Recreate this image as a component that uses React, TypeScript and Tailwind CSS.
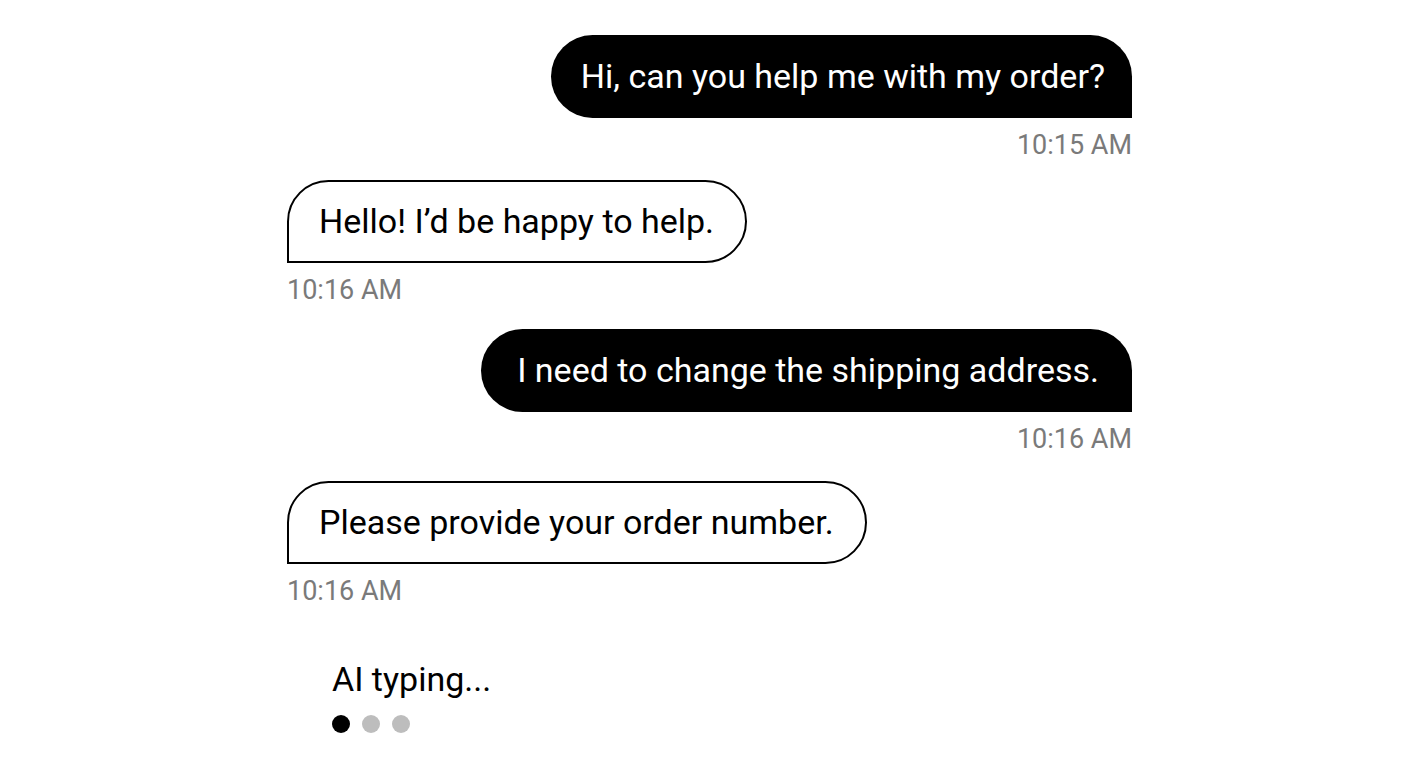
const font = { fontFamily: 'Roboto, "Noto Sans", sans-serif' }

type Msg = { text: string; time: string; mine: boolean; mt: string; pad: string }

const messages: Msg[] = [
  { text: 'Hi, can you help me with my order?', time: '10:15 AM', mine: true, mt: 'mt-[35px]', pad: 'pl-[30px] pr-[27px]' },
  { text: 'Hello! I\u2019d be happy to help.', time: '10:16 AM', mine: false, mt: 'mt-[19px]', pad: 'pl-[30px] pr-[31px]' },
  { text: 'I need to change the shipping address.', time: '10:16 AM', mine: true, mt: 'mt-[23px]', pad: 'pl-[36px] pr-[33px]' },
  { text: 'Please provide your order number.', time: '10:16 AM', mine: false, mt: 'mt-[26px]', pad: 'pl-[30px] pr-[31px]' },
]

function Bubble({ msg }: { msg: Msg }) {
  return (
    <div className={`flex flex-col ${msg.mine ? 'items-end' : 'items-start'} ${msg.mt}`}>
      {msg.mine ? (
        <div className={`h-[83px] flex items-center ${msg.pad} bg-black text-white text-[34px] rounded-[42px] rounded-br-none`}>
          {msg.text}
        </div>
      ) : (
        <div className={`h-[83px] flex items-center ${msg.pad} bg-white text-black text-[34px] border-2 border-black rounded-[42px] rounded-bl-none`}>
          {msg.text}
        </div>
      )}
      <div className="mt-[11px] text-[27px] leading-[32px] text-[#7a7a7a]">{msg.time}</div>
    </div>
  )
}

export default function App() {
  return (
    <div className="min-h-[768px] bg-white" style={font}>
      <div className="ml-[287px] w-[845px] flex flex-col">
        {messages.map((m, i) => (
          <Bubble key={i} msg={m} />
        ))}
        <div className="pl-[45px] mt-[52px]">
          <div className="text-[34px] leading-[40px] text-black">AI typing...</div>
          <div className="flex gap-3 mt-[16px]">
            <span className="w-[18px] h-[18px] rounded-full bg-black" />
            <span className="w-[18px] h-[18px] rounded-full bg-[#bdbdbd]" />
            <span className="w-[18px] h-[18px] rounded-full bg-[#bdbdbd]" />
          </div>
        </div>
      </div>
    </div>
  )
}
